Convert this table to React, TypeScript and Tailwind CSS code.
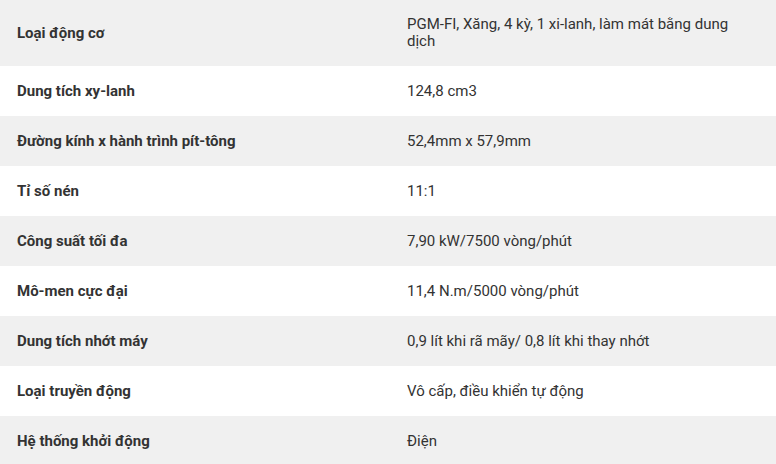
const specs: [string, string][] = [
  ["Loại động cơ", "PGM-FI, Xăng, 4 kỳ, 1 xi-lanh, làm mát bằng dung dịch"],
  ["Dung tích xy-lanh", "124,8 cm3"],
  ["Đường kính x hành trình pít-tông", "52,4mm x 57,9mm"],
  ["Tỉ số nén", "11:1"],
  ["Công suất tối đa", "7,90 kW/7500 vòng/phút"],
  ["Mô-men cực đại", "11,4 N.m/5000 vòng/phút"],
  ["Dung tích nhớt máy", "0,9 lít khi rã mãy/ 0,8 lít khi thay nhớt"],
  ["Loại truyền động", "Vô cấp, điều khiển tự động"],
  ["Hệ thống khởi động", "Điện"],
];

const App = () => {
  return (
    <div className="w-[776px] h-[464px] overflow-hidden bg-white font-['Roboto',sans-serif] text-[15px] leading-[17px] text-[#333]">
      {specs.map(([label, value], i) => (
        <div
          key={label}
          className={
            i % 2 === 0
              ? "flex min-h-[50px] items-center bg-[#f0f0f0] py-4"
              : "flex min-h-[50px] items-center bg-white py-4"
          }
        >
          <div className="w-[390px] shrink-0 pl-[17px] pr-4 font-bold">
            {label}
          </div>
          <div className="flex-1 pl-[17px] pr-4">{value}</div>
        </div>
      ))}
    </div>
  );
};

export default App;
